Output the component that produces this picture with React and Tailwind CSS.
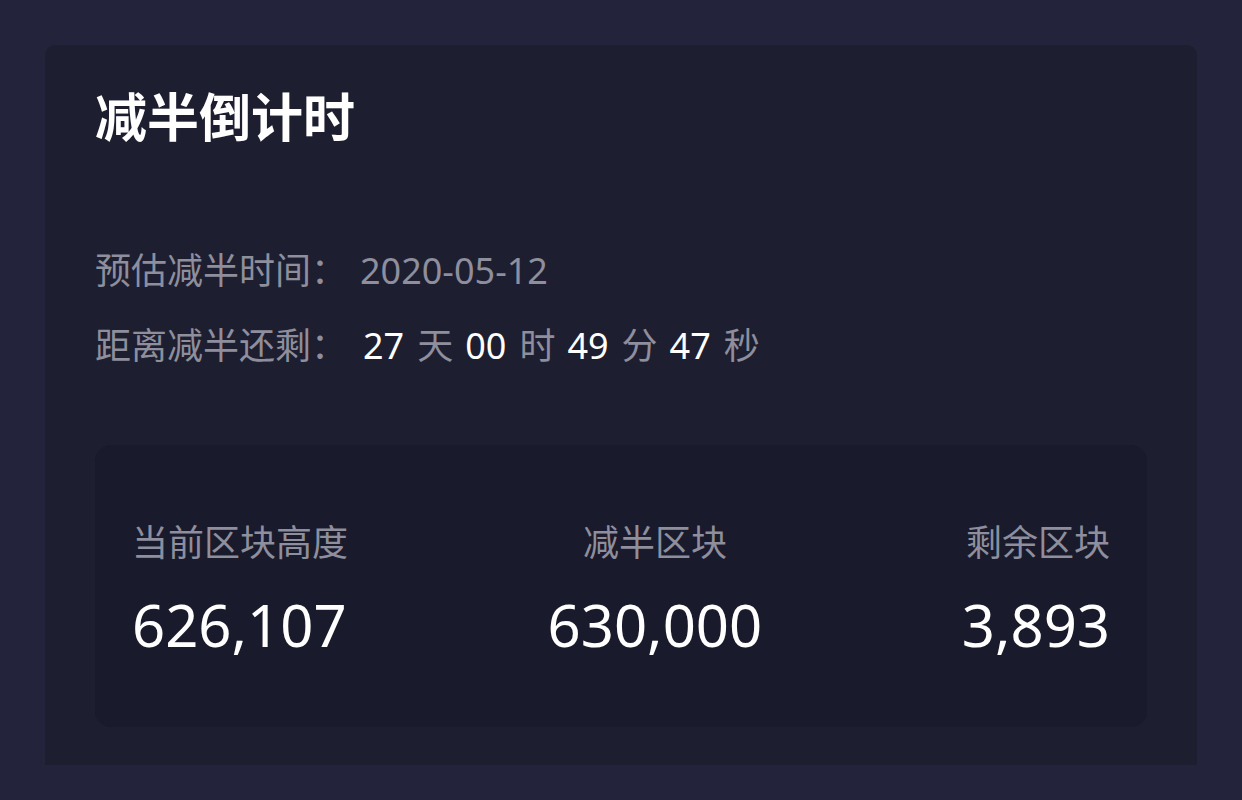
import React from 'react';

const font = { fontFamily: '"Noto Sans", "Noto Sans CJK SC", sans-serif' };

const countdown = [
  { value: '27', unit: '天' },
  { value: '00', unit: '时' },
  { value: '49', unit: '分' },
  { value: '47', unit: '秒' },
];

const stats = [
  { label: '当前区块高度', value: '626,107', align: 'items-start' },
  { label: '减半区块', value: '630,000', align: 'items-center' },
  { label: '剩余区块', value: '3,893', align: 'items-end' },
];

const App = () => {
  return (
    <div
      className="w-[1242px] h-[800px] bg-[#23243c] pt-[45px] px-[45px] overflow-hidden"
      style={font}
    >
      <div className="bg-[#1d1e30] rounded-t-[10px] h-[720px] pt-[48px] px-[50px]">
        <h1 className="text-[52px] leading-none font-bold text-white -mt-[2px]">
          减半倒计时
        </h1>

        <div className="mt-[110px] flex items-center text-[36px] leading-none text-[#8e8e9c]">
          <span className="w-[265px]">预估减半时间：</span>
          <span>2020-05-12</span>
        </div>
        <div className="mt-[39px] flex items-center text-[36px] leading-none text-[#8e8e9c]">
          <span className="w-[268px]">距离减半还剩：</span>
          {countdown.map((c) => (
            <span key={c.unit} className="flex items-center">
              <span className="text-white mr-[13px]">{c.value}</span>
              <span className="mr-[12px]">{c.unit}</span>
            </span>
          ))}
        </div>

        <div className="mt-[81px] bg-[#191a2b] rounded-[16px] h-[282px] px-[37px] pt-[80px] flex justify-between">
          {stats.map((s) => (
            <div key={s.label} className={`flex flex-col ${s.align}`}>
              <span className="text-[36px] leading-none text-[#8e8e9c]">
                {s.label}
              </span>
              <span className="mt-[35px] text-[58px] leading-none text-white">
                {s.value}
              </span>
            </div>
          ))}
        </div>
      </div>
    </div>
  );
};

export default App;
